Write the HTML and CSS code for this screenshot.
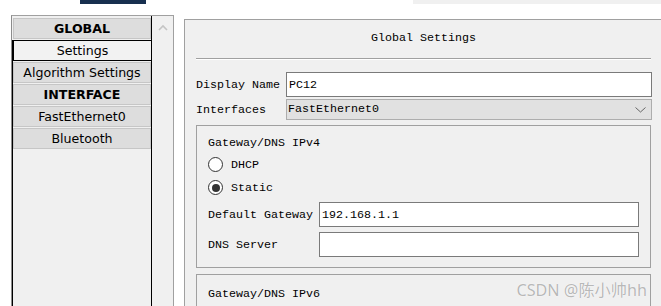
FILE: index.html
```html
<!DOCTYPE html>
<html>
<head>
<meta charset="utf-8">
<link rel="stylesheet" href="styles.css">
</head>
<body>
<div class="topstrip"><div class="navy"></div><div class="graybar"></div></div>
<div class="main">
  <div class="sidebar">
    <div class="list">
      <div class="item head">GLOBAL</div>
      <div class="lower">
        <div class="item sel">Settings</div>
        <div class="item">Algorithm Settings</div>
        <div class="item head">INTERFACE</div>
        <div class="item">FastEthernet0</div>
        <div class="item">Bluetooth</div>
      </div>
    </div>
    <div class="scroll">
      <svg class="up" width="10" height="7" viewBox="0 0 10 7"><path d="M1 6 L5 2 L9 6" fill="none" stroke="#c4c4c4" stroke-width="1.6"/></svg>
    </div>
  </div>
  <div class="content">
    <div class="title">Global Settings</div>
    <div class="rule"></div>
    <div class="row first">
      <div class="lbl">Display Name</div>
      <div class="field">PC12</div>
    </div>
    <div class="row second">
      <div class="lbl">Interfaces</div>
      <div class="select"><span>FastEthernet0</span>
        <svg width="11" height="6" viewBox="0 0 11 6"><path d="M0.5 0.5 L5.5 5 L10.5 0.5" fill="none" stroke="#666" stroke-width="1"/></svg>
      </div>
    </div>
    <div class="box v4">
      <div class="boxtitle">Gateway/DNS IPv4</div>
      <div class="radio r1"><span class="circle"></span><span>DHCP</span></div>
      <div class="radio"><span class="circle on"></span><span>Static</span></div>
      <div class="frow gw">
        <div class="flbl">Default Gateway</div>
        <div class="field small">192.168.1.1</div>
      </div>
      <div class="frow dns">
        <div class="flbl">DNS Server</div>
        <div class="field small"></div>
      </div>
    </div>
    <div class="box v6">
      <div class="boxtitle">Gateway/DNS IPv6</div>
    </div>
  </div>
</div>
<div class="watermark">CSDN @陈小帅hh</div>
</body>
</html>
```
FILE: styles.css
```css
html, body {
  margin: 0;
  padding: 0;
  background: #ffffff;
  width: 661px;
  height: 306px;
  overflow: hidden;
  position: relative;
}
.topstrip {
  display: flex;
  height: 4px;
}
.navy {
  margin-left: 80px;
  width: 66px;
  background: #172f4f;
}
.graybar {
  margin-left: 267px;
  flex: 1;
  background: #f0f0f0;
}
.main {
  display: flex;
  align-items: flex-start;
}
.sidebar {
  margin-top: 11px;
  margin-left: 11px;
  width: 161px;
  height: 290px;
  display: flex;
  border-top: 1px solid #a0a0a0;
  border-left: 1px solid #8c8c8c;
  border-right: 1px solid #a0a0a0;
  background: #f0f0f0;
}
.list {
  width: 139px;
  border-right: 1px solid #000;
  padding-top: 2px;
  display: flex;
  flex-direction: column;
}
.lower {
  flex: 1;
  border-left: 1px solid #000;
}
.item {
  height: 19px;
  width: 136px;
  margin-left: 1px;
  margin-bottom: 1px;
  border: 1px solid #c6c6c6;
  background: #dddddd;
  font-family: "DejaVu Sans", sans-serif;
  font-size: 12.6px;
  line-height: 20px;
  text-align: center;
  color: #000;
  white-space: nowrap;
}
.lower .item {
  margin-left: 0;
}
.head {
  font-weight: bold;
}
.item.sel {
  background: #f2f2f2;
  border: 1px solid #000;
  width: 137px;
}
.scroll {
  width: 21px;
  display: flex;
  justify-content: center;
  align-items: flex-start;
}
.up {
  margin-top: 8px;
}
.content {
  margin-top: 15px;
  margin-left: 10px;
  flex: 1;
  height: 286px;
  overflow: hidden;
  border-top: 1px solid #a0a0a0;
  border-left: 1px solid #a0a0a0;
  background: #f0f0f0;
  padding: 0 10px 0 11px;
  font-family: "Liberation Mono", "Cousine", "Courier New", monospace;
  font-size: 11.67px;
  color: #000;
}
.title {
  padding-top: 11px;
  height: 14px;
  line-height: 14px;
  text-align: center;
}
.rule {
  margin-top: 13px;
  border-top: 1px solid #a0a0a0;
  border-bottom: 1px solid #ffffff;
}
.row {
  display: flex;
  align-items: center;
}
.row.first {
  margin-top: 12px;
}
.row.second {
  margin-top: 2px;
}
.lbl {
  width: 90px;
  flex: none;
}
.field {
  flex: 1;
  height: 23px;
  line-height: 25px;
  border: 1px solid #7a7a7a;
  background: #ffffff;
  padding-left: 2px;
  margin-right: -1px;
}
.select {
  flex: 1;
  height: 19px;
  line-height: 19px;
  border: 1px solid #adadad;
  background: #e1e1e1;
  padding-left: 1px;
  padding-right: 5px;
  margin-right: -1px;
  display: flex;
  justify-content: space-between;
  align-items: center;
}
.box {
  border: 1px solid #a0a0a0;
  padding: 0 11px 0 11px;
}
.v4 {
  margin-top: 5px;
  padding-bottom: 10px;
}
.v6 {
  margin-top: 6px;
  height: 40px;
  border-bottom: none;
}
.boxtitle {
  padding-top: 10px;
  height: 14px;
  line-height: 14px;
}
.v6 .boxtitle {
  padding-top: 12px;
}
.radio {
  height: 23px;
  display: flex;
  align-items: center;
  gap: 8px;
}
.radio.r1 {
  margin-top: 3px;
}
.circle {
  width: 13px;
  height: 13px;
  border: 1px solid #333;
  border-radius: 50%;
  background: #fff;
  display: flex;
  align-items: center;
  justify-content: center;
}
.circle.on::after {
  content: "";
  width: 8px;
  height: 8px;
  border-radius: 50%;
  background: #333;
}
.frow {
  display: flex;
  align-items: center;
}
.frow.gw {
  margin-top: 3px;
}
.frow.dns {
  margin-top: 5px;
}
.flbl {
  width: 111px;
  flex: none;
}
.field.small {
  margin-right: 0;
}
.watermark {
  position: absolute;
  right: 14px;
  top: 277px;
  font-family: "Noto Sans", "Noto Sans CJK SC", sans-serif;
  font-size: 16.2px;
  color: #b8b8b8;
  text-shadow: 0 0 1px #ffffff, 0 0 1px #ffffff;
  white-space: nowrap;
}
```
